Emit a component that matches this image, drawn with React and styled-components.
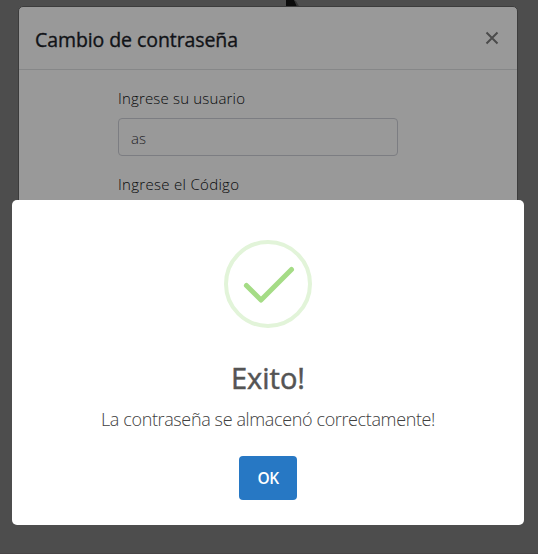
import React from 'react';
import styled, { createGlobalStyle } from 'styled-components';

const GlobalStyle = createGlobalStyle`
  * { box-sizing: border-box; }
  body { margin: 0; background: #4d4d4d; overflow: hidden; font-family: 'Open Sans', 'Noto Sans', sans-serif; }
`;

const Page = styled.main`
  position: relative;
  width: 538px;
  height: 554px;
  padding: 6px 20px 0 18px;
  background: #4d4d4d;
  border-bottom: 1px solid #484546;
  overflow: hidden;
`;

const BackdropMark = styled.svg`
  position: absolute;
  left: 284px;
  top: 0;
`;

const FormModal = styled.section`
  position: relative;
  height: 480px;
  border: 1px solid #3c3c3c;
  border-radius: 5px;
  background: #999;
  color: #111317;
`;

const ModalHeader = styled.header`
  display: flex;
  align-items: center;
  justify-content: space-between;
  height: 63px;
  padding: 3px 18px 0 16px;
  border-bottom: 1px solid #868788;
`;

const ModalTitle = styled.h5`
  margin: 0;
  font-size: 19.5px;
  line-height: 30px;
  font-weight: 500;
  -webkit-text-stroke: 0.35px currentColor;
  letter-spacing: ${({ $tracking }) => $tracking};
  white-space: nowrap;
`;

const CloseButton = styled.button`
  display: flex;
  padding: 0;
  margin-top: -3px;
  border: 0;
  background: none;
  color: #4b4b4b;
`;

const FormBody = styled.form`
  display: flex;
  flex-direction: column;
  width: 280px;
  margin: 16px 0 0 99px;
`;

const Label = styled.label`
  height: 24px;
  font-size: 15px;
  line-height: 24px;
  font-weight: 300;
  letter-spacing: ${({ $tracking }) => $tracking};
  white-space: nowrap;
  color: #08090b;
`;

const Input = styled.input`
  height: 38px;
  margin: 8px 0 16px;
  padding: 1px 12px 0;
  border: 1px solid #7c7d82;
  border-radius: 4px;
  background: transparent;
  color: #1f2226;
  font: 300 15px 'Open Sans', sans-serif;
  outline: none;
`;

const Alert = styled.section`
  position: absolute;
  left: 12px;
  top: 200px;
  display: flex;
  flex-direction: column;
  align-items: center;
  width: 512px;
  height: 325px;
  padding-top: 40px;
  border-radius: 5px;
  background: #fff;
  color: #545454;
`;

const AlertTitle = styled.h2`
  margin: 30px 0 0;
  font-size: 29px;
  line-height: 40px;
  font-weight: 500;
  -webkit-text-stroke: 0.5px currentColor;
  letter-spacing: ${({ $tracking }) => $tracking};
`;

const AlertText = styled.p`
  margin: 8px 0 0;
  font-size: 18px;
  line-height: 26px;
  font-weight: 300;
  letter-spacing: ${({ $tracking }) => $tracking};
  white-space: nowrap;
  color: #404040;
`;

const ConfirmButton = styled.button`
  width: 58px;
  height: 44px;
  margin-top: 24px;
  padding: 0;
  border: 0;
  border-radius: 4px;
  background: #2778c4;
  color: #fff;
  font: 600 15.5px 'Open Sans', sans-serif;
  letter-spacing: -0.6px;
`;

function SuccessIcon() {
  return (
    <svg width="88" height="88" viewBox="0 0 88 88" fill="none">
      <circle cx="44" cy="44" r="42" stroke="#e2f4d9" strokeWidth="4" />
      <path d="M22.4 45.5L37 60L67.5 29.5" stroke="#a5dc86" strokeWidth="5" strokeLinecap="round" strokeLinejoin="round" />
    </svg>
  );
}

export default function App() {
  return (
    <>
      <GlobalStyle />
      <Page>
        <BackdropMark width="20" height="8" viewBox="0 0 20 8">
          <path d="M8 0L12 1L16 8H8Z" fill="#353535" />
          <path d="M2 0H10L13 7H7V3V7H2Z" fill="#0c0c0c" />
        </BackdropMark>
        <FormModal>
          <ModalHeader>
            <ModalTitle $tracking="-0.08px">Cambio de contraseña</ModalTitle>
            <CloseButton type="button" aria-label="Cerrar">
              <svg width="14" height="14" viewBox="0 0 14 14" fill="none" stroke="currentColor" strokeWidth="2">
                <path d="M1.5 1.5L12.5 12.5M12.5 1.5L1.5 12.5" />
              </svg>
            </CloseButton>
          </ModalHeader>
          <FormBody>
            <Label htmlFor="user" $tracking="0.17px">Ingrese su usuario</Label>
            <Input id="user" defaultValue="as" />
            <Label $tracking="0.3px">Ingrese el Código</Label>
          </FormBody>
        </FormModal>
        <Alert role="dialog">
          <SuccessIcon />
          <AlertTitle $tracking="0">Exito!</AlertTitle>
          <AlertText $tracking="-0.37px">La contraseña se almacenó correctamente!</AlertText>
          <ConfirmButton type="button">OK</ConfirmButton>
        </Alert>
      </Page>
    </>
  );
}
